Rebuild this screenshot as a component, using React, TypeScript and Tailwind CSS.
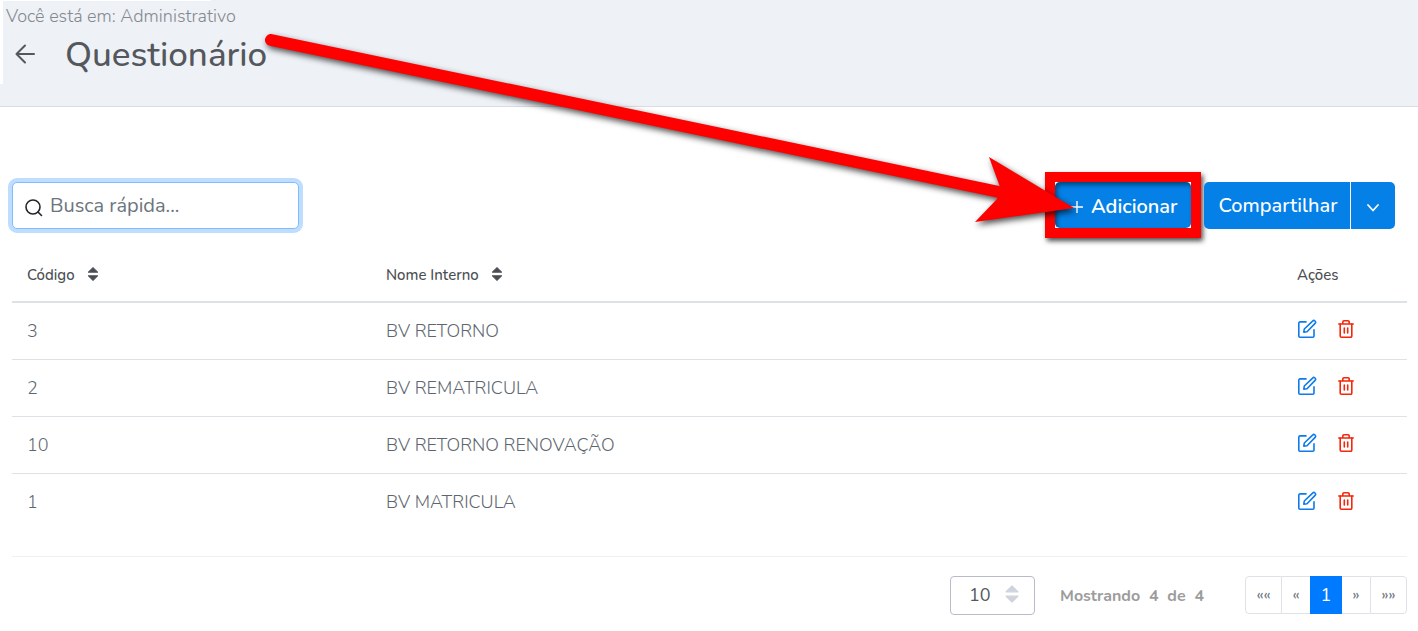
import React from 'react';

type Row = {
  codigo: number;
  nome: string;
};

const ROWS: Row[] = [
  { codigo: 3, nome: 'BV RETORNO' },
  { codigo: 2, nome: 'BV REMATRICULA' },
  { codigo: 10, nome: 'BV RETORNO RENOVAÇÃO' },
  { codigo: 1, nome: 'BV MATRICULA' },
];

const ArrowLeftIcon = () => (
  <svg className="h-5 w-5" viewBox="0 0 20 20" fill="none" stroke="currentColor" strokeWidth="2" strokeLinecap="round" strokeLinejoin="round">
    <path d="M19 10H1.500M10 1.500L1.500 10l8.500 8.500" />
  </svg>
);

const SearchIcon = () => (
  <svg className="h-[18px] w-[18px]" viewBox="0 0 18 18" fill="none" stroke="currentColor" strokeWidth="1.6" strokeLinecap="round">
    <circle cx="8" cy="8" r="7" />
    <path d="M13 13l3.500 3.500" />
  </svg>
);

const SortIcon: React.FC<{ className: string }> = ({ className }) => (
  <svg className={className} viewBox="0 0 14 18" fill="currentColor" stroke="currentColor" strokeWidth="1" strokeLinejoin="round">
    <path d="M7 2.500L11.800 7.200H2.200z M7 15.500L11.800 10.800H2.200z" />
  </svg>
);

const EditIcon = () => (
  <svg className="h-5 w-5" viewBox="0 0 20 20" fill="none" stroke="currentColor" strokeWidth="1.6" strokeLinecap="round" strokeLinejoin="round">
    <path d="M9 2.900H3A1.200 1.200 0 0 0 1.800 4.100V17A1.200 1.200 0 0 0 3 18.200H15.800A1.200 1.200 0 0 0 17 17V10.800" />
    <path d="M6.800 13.200L7.300 10L15.600 2.100A1.600 1.600 0 0 1 18.100 4.400L10 12.700z" />
  </svg>
);

const TrashIcon = () => (
  <svg className="h-5 w-5" viewBox="0 0 20 20" fill="none" stroke="currentColor" strokeWidth="1.6" strokeLinecap="round" strokeLinejoin="round">
    <path d="M2.800 5H17.200M6.800 5V3A1.200 1.200 0 0 1 8 1.800H12A1.200 1.200 0 0 1 13.200 3V5" />
    <path d="M4.200 5V17A1.200 1.200 0 0 0 5.400 18.200H14.600A1.200 1.200 0 0 0 15.800 17V5M8.300 9V14M11.700 9V14" />
  </svg>
);

// Red annotation arrow drawn from the title to the add button
const GuideArrow = () => (
  <svg className="pointer-events-none absolute left-0 top-0 z-20 drop-shadow-[2px_3px_3px_rgba(0,0,0,0.7)]" width="1100" height="250" viewBox="0 0 1100 250" fill="#ff0000" aria-hidden="true">
    <path d="M271 40L1004 193" stroke="#ff0000" strokeWidth="12" strokeLinecap="round" />
    <path d="M1074 208L989 157L1000 187L997 199L975 222z" />
  </svg>
);

const Header = () => (
  <header className="h-[107px] border-b border-[#d9dce1] bg-[#eef1f6]">
    <div className="h-[84px] border-l-[3px] border-white">
      <div className="h-px w-52 bg-white" />
      <p className="pl-[3px] pt-[3px] text-[18px] font-light leading-6 text-[#85888d]">Você está em: Administrativo</p>
      <div className="flex items-center gap-[30px] pl-3 text-[#54575b]">
        <button type="button" aria-label="Voltar">
          <ArrowLeftIcon />
        </button>
        <h1 className="pt-[2px] text-[35px] font-medium leading-[50px]">Questionário</h1>
      </div>
    </div>
  </header>
);

const Toolbar = () => (
  <div className="flex items-start justify-between pr-3">
    <label className="flex h-[47px] w-[287px] items-center gap-[7px] rounded-[5px] border border-[#80bdff] bg-white pl-3 text-[#212529] ring-4 ring-[#bfdeff]">
      <span className="pt-1">
        <SearchIcon />
      </span>
      <input
        type="text"
        aria-label="Busca rápida"
        placeholder="Busca rápida..."
        className="w-full min-w-0 bg-transparent text-[20px] outline-none placeholder:text-[#6c757d]"
      />
    </label>
    <div className="flex items-start text-[20px] font-medium text-white">
      <div className="-my-[10px] mr-[3px] border-10 border-[#ff0000] bg-white shadow-[2px_3px_5px_rgba(0,0,0,0.7)]">
        <button type="button" className="flex h-[46px] w-[136px] items-center gap-2 rounded-[5px] bg-[#0480e6] pl-4 pt-1 font-semibold shadow-[inset_2px_3px_4px_rgba(0,0,0,0.45)]">
          <svg className="h-3 w-3 shrink-0" viewBox="0 0 12 12" stroke="currentColor" strokeWidth="1.4">
            <path d="M6 0v12M0 6h12" />
          </svg>
          Adicionar
        </button>
      </div>
      <button type="button" className="h-[47px] w-[146px] rounded-l-[5px] bg-[#0480e6] pl-[2px]">
        Compartilhar
      </button>
      <button type="button" aria-label="Mais opções" className="ml-px flex h-[47px] w-11 items-center justify-center rounded-r-[5px] bg-[#0480e6] pt-1">
        <svg className="h-2 w-3" viewBox="0 0 12 8" fill="none" stroke="currentColor" strokeWidth="1.8" strokeLinecap="round" strokeLinejoin="round">
          <path d="M1 1l5 5.500L11 1" />
        </svg>
      </button>
    </div>
  </div>
);

const SortHeader: React.FC<{ children: React.ReactNode }> = ({ children }) => (
  <button type="button" className="flex items-center gap-[11px]">
    {children}
    <SortIcon className="-mt-[2px] h-[18px] w-[14px]" />
  </button>
);

const DataTable = () => (
  <table className="mt-[18px] w-full table-fixed border-separate border-spacing-0 text-left">
    <thead className="text-[15px] text-[#4a4e52]">
      <tr>
        <th className="h-14 w-[359px] border-b-2 border-[#dee2e6] pl-[15px] pt-[2px] font-medium">
          <SortHeader>Código</SortHeader>
        </th>
        <th className="h-14 border-b-2 border-[#dee2e6] pl-[15px] pt-[2px] font-medium">
          <SortHeader>Nome Interno</SortHeader>
        </th>
        <th className="h-14 w-[125px] border-b-2 border-[#dee2e6] pl-[15px] pt-[2px] font-medium">Ações</th>
      </tr>
    </thead>
    <tbody className="text-[18px] font-light text-[#5d666e] [&>tr:not(:last-child)>td]:border-b">
      {ROWS.map((row) => (
        <tr key={row.codigo}>
          <td className="h-[57px] border-[#dee2e6] pl-[15px]">{row.codigo}</td>
          <td className="h-[57px] border-[#dee2e6] pl-[15px]">{row.nome}</td>
          <td className="h-[57px] border-[#dee2e6] pb-1 pl-[15px]">
            <div className="flex items-center gap-[19px]">
              <button type="button" aria-label="Editar" className="text-[#0f7be8]">
                <EditIcon />
              </button>
              <button type="button" aria-label="Excluir" className="text-[#f5260b]">
                <TrashIcon />
              </button>
            </div>
          </td>
        </tr>
      ))}
    </tbody>
  </table>
);

const Footer = () => (
  <div className="mt-[25px] flex items-start justify-end border-t border-[#eff0f1] pt-[19px]">
    <div className="relative">
      <select aria-label="Itens por página" defaultValue="10" className="h-[39px] w-[85px] appearance-none rounded-[4px] border border-[#b9bbca] bg-white pl-[18px] text-[18px] text-[#54575b]">
        <option>10</option>
        <option>25</option>
        <option>50</option>
      </select>
      <span className="pointer-events-none absolute right-[14px] top-[7px] text-[#d0d3dd]">
        <SortIcon className="h-[22px] w-[18px]" />
      </span>
    </div>
    <p className="ml-[25px] flex w-[144px] justify-between text-[16px] font-bold leading-10 text-[#9c9c9c]">
      <span>Mostrando</span>
      <span>4</span>
      <span>de</span>
      <span>4</span>
    </p>
    <nav aria-label="Paginação" className="ml-[41px] flex h-[38px] text-[16px] text-[#6c757d]">
      <button type="button" className="w-[37px] rounded-l-[4px] border border-[#dee2e6]">««</button>
      <button type="button" className="w-7 border-y border-[#dee2e6]">«</button>
      <button type="button" aria-current="page" className="w-8 bg-[#007bff] text-[18px] text-white">1</button>
      <button type="button" className="w-7 border-y border-[#dee2e6]">»</button>
      <button type="button" className="w-[37px] rounded-r-[4px] border border-[#dee2e6]">»»</button>
    </nav>
  </div>
);

const App: React.FC = () => {
  return (
    <div className="relative min-h-screen bg-white font-['Nunito','Lato',sans-serif]">
      <Header />
      <main className="pb-4 pl-3 pr-[11px] pt-[75px]">
        <Toolbar />
        <DataTable />
        <Footer />
      </main>
      <GuideArrow />
    </div>
  );
};

export default App;
